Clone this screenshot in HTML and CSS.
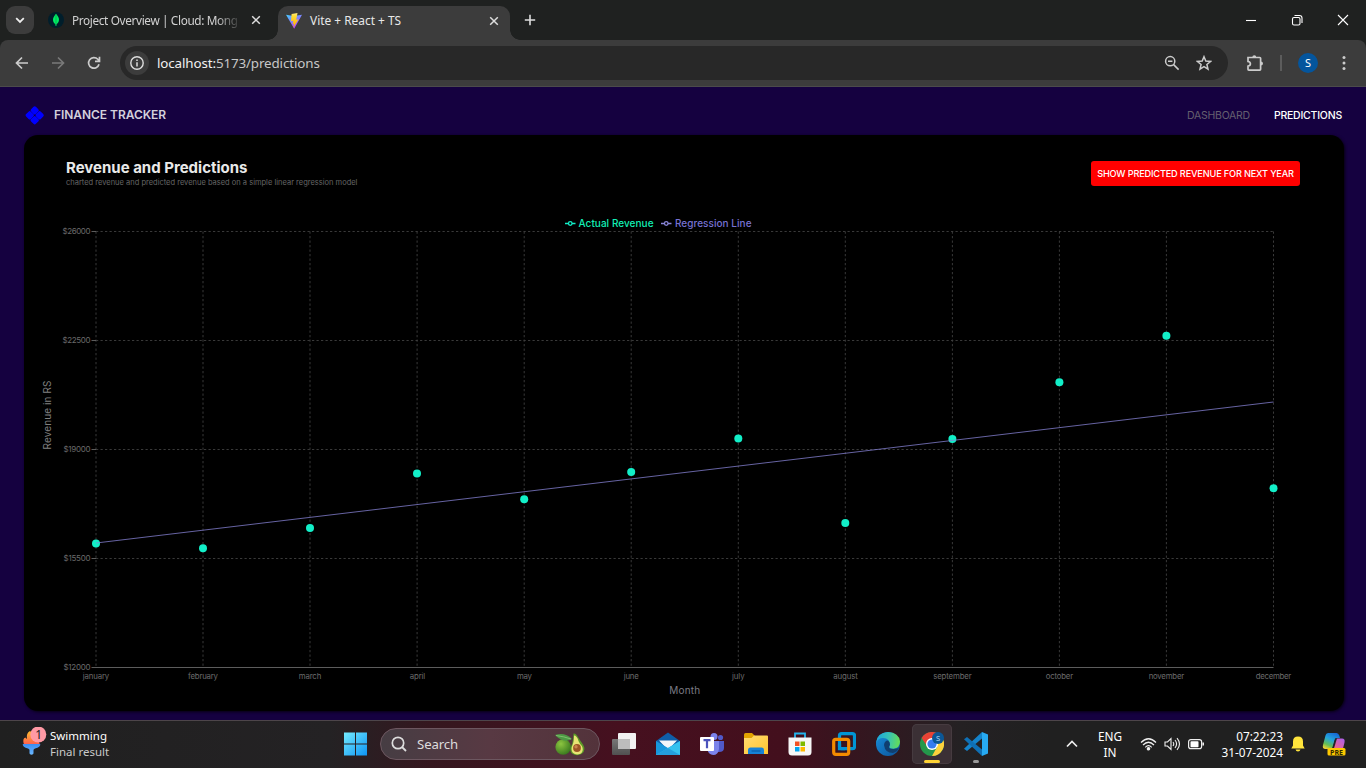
FILE: index.html
```html
<!DOCTYPE html>
<html lang="en">
<head>
<meta charset="utf-8">
<title>Vite + React + TS</title>
<link rel="stylesheet" href="styles.css">
</head>
<body>
<header class="tabs">
  <button class="tab-search"><svg width="28" height="28" viewBox="0 0 28 28"><path d="M10.2 12.2l3.8 3.7 3.8-3.7" fill="none" stroke="#eee" stroke-width="1.8"/></svg></button>
  <div class="tab idle">
    <svg width="16" height="16" viewBox="0 0 16 16"><circle cx="8" cy="8" r="8" fill="#001e2b"/><path d="M8 1.800c2 2.500 3 4 3 6 0 2.200-1.300 3.700-2.600 4.700L8.200 14h-.5l-.2-1.500C6.200 11.500 5 10 5 7.800c0-2 1-3.500 3-6z" fill="#00ed64"/><path d="M8 2v12" stroke="#00a34a" stroke-width=".7"/></svg>
    <span class="tab-title faded">Project Overview | Cloud: Mong</span>
    <svg class="close" width="10" height="10" viewBox="0 0 10 10"><path d="M1.200 1.200l7.600 7.600M8.800 1.200L1.200 8.800"/></svg>
  </div>
  <div class="tab active">
    <svg width="16" height="16" viewBox="0 0 16 16"><defs><linearGradient id="vb" x1="0" y1="0" x2=".6" y2="1"><stop offset="0" stop-color="#41d1ff"/><stop offset="1" stop-color="#bd34fe"/></linearGradient><linearGradient id="vy" x1="0" y1="0" x2="0" y2="1"><stop offset="0" stop-color="#ffea83"/><stop offset=".2" stop-color="#ffdd35"/><stop offset="1" stop-color="#ffa800"/></linearGradient></defs><path d="M0 1.700l7.600 1.300L16 1.700 8.200 15.700z" fill="url(#vb)"/><path d="M11.500 0L5.600 1l-.6 7.300 2.300-.5-.7 3.200 1.500-.5-.9 4.200 5.300-8.400-2.300.4z" fill="url(#vy)"/></svg>
    <span class="tab-title">Vite + React + TS</span>
    <svg class="close" width="10" height="10" viewBox="0 0 10 10"><path d="M1.200 1.200l7.600 7.600M8.800 1.200L1.200 8.800"/></svg>
  </div>
  <svg class="new-tab" width="12" height="12" viewBox="0 0 12 12"><path d="M6 .8v10.400M.8 6h10.400" stroke="#ddd" stroke-width="1.600"/></svg>
  <div class="window-buttons">
    <svg width="12" height="12" viewBox="0 0 12 12"><path d="M1 6.500h10"/></svg>
    <svg width="12" height="12" viewBox="0 0 12 12"><rect x="1.500" y="3.500" width="7.500" height="7.500" rx="1.500"/><path d="M3.500 1.500H8.500a2.500 2.500 0 0 1 2.500 2.500v5"/></svg>
    <svg width="12" height="12" viewBox="0 0 12 12"><path d="M1 1l10 10M11 1L1 11"/></svg>
  </div>
</header>
<div class="toolbar-wrap">
<nav class="toolbar">
  <svg class="nav-icon" width="14" height="14" viewBox="0 0 14 14"><path d="M13 7H2M7 1.500L1.500 7 7 12.500"/></svg>
  <svg class="nav-icon off" width="14" height="14" viewBox="0 0 14 14"><path d="M1 7h11M7 1.500L12.500 7 7 12.500"/></svg>
  <svg class="nav-icon" width="14" height="14" viewBox="0 0 14 14"><path d="M12 8.200A5.300 5.300 0 1 1 10.800 3.300L12.300 5M12.500 .8v4.600H8"/></svg>
  <div class="omnibox">
    <span class="site-info"><svg width="14" height="14" viewBox="0 0 14 14"><circle cx="7" cy="7" r="6.200" fill="none" stroke="#ddd" stroke-width="1.400"/><path d="M7 6.200v4.200M7 3.500v1.500" stroke="#ddd" stroke-width="1.500"/></svg></span>
    <span class="url"><b>localhost:</b>5173/predictions</span>
    <svg class="bar-icon" width="16" height="16" viewBox="0 0 16 16"><circle cx="6.200" cy="6.200" r="4.600"/><path d="M9.600 9.600l5 5M4 6.200h4.400"/></svg>
    <svg class="bar-icon" width="16" height="16" viewBox="0 0 16 16"><path d="M8 1.700l1.800 4.400 4.700.4-3.600 3 1.100 4.600L8 11.700l-4 2.400 1.100-4.600-3.600-3 4.700-.4z"/></svg>
  </div>
  <svg class="bar-icon puzzle" width="18" height="18" viewBox="0 0 18 18"><path d="M2 3.500h11.800q.8 0 .8.800v11q0 .8-.8.800H2.800q-.8 0-.8-.8v-3.100c3.200-.4 3.200-4.300 0-4.700z" stroke-width="1.700"/><path d="M6.300 3.500a2 2.200 0 0 1 4 0zM14.800 7.600a2.200 2 0 0 1 0 4z" fill="#ccc" stroke="none"/></svg>
  <i class="divider"></i>
  <span class="avatar">S</span>
  <svg class="kebab" width="4" height="16" viewBox="0 0 4 16"><circle cx="2" cy="2.500" r="1.500"/><circle cx="2" cy="8" r="1.500"/><circle cx="2" cy="13.500" r="1.500"/></svg>
</nav>
</div>

<main class="app">
  <div class="app-nav">
    <svg class="logo" width="20" height="20" viewBox="-10 -10 20 20" fill="#0000ff"><g transform="translate(-.3 .3) rotate(45)"><rect x="-6.900" y="-6.900" width="6.800" height="6.800" rx="1.700"/><rect x=".1" y="-6.900" width="6.800" height="6.800" rx="1.700"/><rect x="-6.900" y=".1" width="6.800" height="6.800" rx="1.700"/><rect x=".1" y=".1" width="6.800" height="6.800" rx="1.700"/></g></svg>
    <h1>FINANCE TRACKER</h1>
    <a class="link">DASHBOARD</a>
    <a class="link current">PREDICTIONS</a>
  </div>
  <section class="card">
    <div class="card-head">
      <div>
        <h2>Revenue and Predictions</h2>
        <p>charted revenue and predicted revenue based on a simple linear regression model</p>
      </div>
      <button class="predict"><span>SHOW PREDICTED REVENUE FOR NEXT YEAR</span></button>
    </div>
    <svg class="chart" width="1320" height="511" viewBox="24 200 1320 511">
      <g class="grid">
        <path d="M96 231.500H1273.500M96 340.500H1273.500M96 449.500H1273.500M96 558.500H1273.500"/>
        <path d="M96 231.500V667M203 231.500V667M310 231.500V667M417.100 231.500V667M524.200 231.500V667M631.200 231.500V667M738.300 231.500V667M845.300 231.500V667M952.400 231.500V667M1059.400 231.500V667M1166.400 231.500V667M1273.500 231.500V667"/>
      </g>
      <path class="axis" d="M91.500 667.500H1273.500M91.500 231.500H96M91.500 340.500H96M91.500 449.500H96M91.500 558.500H96"/>
      <g class="ylabels">
        <text x="90.500" y="234.200" textLength="28">$26000</text><text x="90.500" y="343.200" textLength="28">$22500</text><text x="90.500" y="452.200" textLength="27">$19000</text><text x="90.500" y="561.200" textLength="27">$15500</text><text x="90.500" y="670.200" textLength="27">$12000</text>
      </g>
      <g class="xlabels">
        <text x="96" y="679" textLength="26.500">january</text><text x="203" y="679" textLength="30">february</text><text x="310" y="679" textLength="22.500">march</text><text x="417.500" y="679" textLength="15.500">april</text><text x="524.500" y="679" textLength="15">may</text><text x="631.300" y="679" textLength="15">june</text><text x="738.300" y="679" textLength="12.500">july</text><text x="845.500" y="679" textLength="24.500">august</text><text x="952.400" y="679" textLength="38.500">september</text><text x="1059.400" y="679" textLength="27.500">october</text><text x="1166.400" y="679" textLength="35.500">november</text><text x="1273.500" y="679" textLength="35.500">december</text>
      </g>
      <text class="axis-title month" x="684.700" y="694" textLength="31">Month</text>
      <text class="axis-title" transform="translate(51 415) rotate(-90)" textLength="69">Revenue in RS</text>
      <g fill="none" stroke="#12efc8" stroke-width="1.300"><path d="M565 223.500h3.500M572 223.500h3.500"/><circle cx="570.250" cy="223.500" r="1.800"/></g>
      <text class="legend actual" x="578.500" y="227" textLength="75">Actual Revenue</text>
      <g fill="none" stroke="#8884d8" stroke-width="1.300"><path d="M661 223.500h3.500M668 223.500h3.500"/><circle cx="666.250" cy="223.500" r="1.800"/></g>
      <text class="legend regression" x="675" y="227" textLength="76.500">Regression Line</text>
      <g fill="#12efc8"><circle cx="96" cy="543.400" r="4"/><circle cx="203" cy="548.200" r="4"/><circle cx="310" cy="528" r="4"/><circle cx="417" cy="473.500" r="4"/><circle cx="524.200" cy="499.300" r="4"/><circle cx="631.200" cy="472" r="4"/><circle cx="738.300" cy="438.600" r="4"/><circle cx="845.300" cy="522.900" r="4"/><circle cx="952.400" cy="438.900" r="4"/><circle cx="1059.400" cy="382.200" r="4"/><circle cx="1166.400" cy="335.700" r="4"/><circle cx="1273.500" cy="488.200" r="4"/></g>
      <path d="M96 543L1273.500 402" stroke="#8884d8" stroke-width=".75"/>
    </svg>
  </section>
</main>

<footer class="taskbar">
  <div class="widget">
    <svg width="28" height="34" viewBox="0 0 28 34"><defs><linearGradient id="fl" x1="0" y1="0" x2="0" y2="1"><stop offset="0" stop-color="#ffbd2e"/><stop offset="1" stop-color="#ff5d4d"/></linearGradient><linearGradient id="tb" x1="0" y1="0" x2="0" y2="1"><stop offset="0" stop-color="#3a8cf0"/><stop offset="1" stop-color="#6bb8ff"/></linearGradient></defs><path d="M4 17.500q-2-6 1.500-7 .5 1.500 1.500 1Q6 6 10 4q6 4 10 13.500z" fill="url(#fl)"/><path d="M2.700 17h17.600q.3 3.300-5.300 4.500-1.500.5-1.500 1.500v3.500q-2 2.600-4 0V23q0-1-1.500-1.500-5.500-1.200-5.300-4.500z" fill="url(#tb)"/><circle cx="18.300" cy="7.500" r="8" fill="#ff99a4"/><text x="18.600" y="11.800" text-anchor="middle" font-family="Noto Sans,sans-serif" font-size="12" fill="#222">1</text></svg>
    <div><strong>Swimming</strong><span>Final result</span></div>
  </div>
  <svg class="start" width="24" height="24" viewBox="0 0 24 24"><defs><linearGradient id="wn" gradientUnits="userSpaceOnUse" x1="0" y1="0" x2="24" y2="24"><stop offset="0" stop-color="#75ecff"/><stop offset="1" stop-color="#0a91f4"/></linearGradient></defs><path d="M0 .500h11v11H0zM12 .500h11v11H12zM0 12.500h11v11H0zM12 12.500h11v11H12z" fill="url(#wn)"/></svg>
  <div class="search">
    <svg width="16" height="16" viewBox="0 0 16 16"><circle cx="7" cy="7" r="5.700" fill="none" stroke="#ddd" stroke-width="1.700"/><path d="M11 11l4 4" stroke="#ddd" stroke-width="1.800"/></svg>
    <span>Search</span>
    <svg width="30" height="23" viewBox="0 0 30 23"><defs><radialGradient id="av" cx=".35" cy=".3" r=".8"><stop offset="0" stop-color="#8cc540"/><stop offset="1" stop-color="#32721b"/></radialGradient></defs><circle cx="8.200" cy="14" r="7.800" fill="url(#av)"/><path d="M0 2q10-3 17 4-8 5-17-4z" fill="#4d9944"/><path d="M1 2.500q8 1 15 3.500" stroke="#8cc876" stroke-width=".8" fill="none"/><path d="M18.500.500q2-.5 3.500 2 3 5 6 9 3.500 6-1.500 9.500-5 2.500-9.500-.5-3-3-.5-8 1.500-3 2-12z" fill="#5b9a28"/><path d="M19 2.500q3 0 4.500 5.500 1 2.500 3.400 5 2.500 5-1.400 7.700-4.500 2-7.700-1-2.500-3-.3-7.700 1.500-3 1.500-9.500z" fill="#e8e474"/><circle cx="22" cy="15" r="3.900" fill="#9c5526"/><circle cx="21" cy="13.800" r="1.700" fill="#c9824d"/></svg>
  </div>
  <div class="apps">
    <span class="app-slot"><svg viewBox="0 0 24 24"><defs><linearGradient id="tv" x1="0" y1="0" x2="0" y2="1"><stop offset="0" stop-color="#777"/><stop offset="1" stop-color="#505050"/></linearGradient></defs><rect x="6" y="1" width="18" height="16" rx="1" fill="#f2f2f2"/><rect x="0" y="7" width="18" height="16" rx="1" fill="url(#tv)"/><path d="M6 7h12v10H6z" fill="#bdbdbd"/></svg></span>
    <span class="app-slot"><svg viewBox="0 0 24 24"><path d="M0 9L12 .500 24 9v5H0z" fill="#0f5ea8"/><path d="M3 8.500h18L12 18z" fill="#f3f6fa"/><path d="M0 9l12 7 12-7v14H0z" fill="#1797dc"/><path d="M24 9v14H0l12-7z" fill="#35c1ee"/><path d="M0 23l12-7 12 7z" fill="#249fdd"/></svg></span>
    <span class="app-slot"><svg viewBox="0 0 24 24"><circle cx="14" cy="4.500" r="3.500" fill="#7b83eb"/><circle cx="20.500" cy="5.500" r="2.600" fill="#5059c9"/><path d="M15 9h9v7q0 4-5 4h-4z" fill="#5059c9"/><path d="M7.500 9H19v8q-1 6-5.800 6-4.700-.5-5.700-5z" fill="#7b83eb"/><rect y="5" width="14" height="14" rx="1" fill="#fff"/><path d="M3.500 8.200h7M7 8.200v8" stroke="#4b53bc" stroke-width="2.200"/></svg></span>
    <span class="app-slot"><svg viewBox="0 0 24 24"><defs><linearGradient id="fo" x1="0" y1="0" x2="1" y2="1"><stop offset="0" stop-color="#ffdc72"/><stop offset="1" stop-color="#ffc42e"/></linearGradient></defs><path d="M0 2.500Q0 1 1.500 1H8l2.500 2.500V9H0z" fill="#e2a300"/><path d="M0 6h7.500L10 3.500h13q1 0 1 1V22H0z" fill="url(#fo)"/><path d="M4 22v-4q0-2.500 2.500-2.500h11q2.500 0 2.500 2.500v4z" fill="#1683d8"/><path d="M7.500 19h9" stroke="#0b5eaa" stroke-width="1.200"/></svg></span>
    <span class="app-slot"><svg viewBox="0 0 24 24"><path d="M7 6V1.500h10V6" fill="none" stroke="#24b5ed" stroke-width="1.800"/><path d="M.5 5.500h23V20q0 3.500-3.500 3.500H4Q.5 23.500.5 20z" fill="#f7f7f7"/><path d="M7 9.500h4.500V14H7z" fill="#f25022"/><path d="M12.500 9.500H17V14h-4.500z" fill="#7fba00"/><path d="M7 15h4.500v4.500H7z" fill="#00a4ef"/><path d="M12.500 15H17v4.500h-4.500z" fill="#ffb900"/></svg></span>
    <span class="app-slot"><svg viewBox="0 0 24 24"><rect x="7.500" y="1.700" width="15" height="15" rx="2" fill="none" stroke="#0095d5" stroke-width="3.200"/><rect x="1.700" y="7.300" width="15" height="15" rx="2" fill="none" stroke="#f38b00" stroke-width="3.200"/><path d="M7.500 12v4.700h5.500" fill="none" stroke="#0095d5" stroke-width="3.200"/></svg></span>
    <span class="app-slot"><svg viewBox="0 0 24 24"><defs><linearGradient id="eg" x1="0" y1=".3" x2="1" y2=".4"><stop offset="0" stop-color="#1ba5de"/><stop offset=".5" stop-color="#35c1b8"/><stop offset="1" stop-color="#65dc56"/></linearGradient><linearGradient id="eb" x1="0" y1="0" x2="1" y2="1"><stop offset="0" stop-color="#178fdd"/><stop offset="1" stop-color="#0c5298"/></linearGradient></defs><circle cx="12" cy="12" r="12" fill="url(#eb)"/><path d="M0 11Q1 .5 12 0q11 .5 12 9.500 0 6.500-6.500 7.300-5.500 0-3.500-3.300Q14 6 7 6 2 6 0 11z" fill="url(#eg)"/><path d="M8 13q.5-4.500 4-4.500 2 1.500 2 4-3.500 4.800 4 4.500 4-.5 5-1.500-1 4-6 5.500-8 0-9-8z" fill="#103f70"/></svg></span>
    <span class="app-slot selected"><svg viewBox="0 0 24 24"><circle cx="12" cy="12" r="12" fill="#24984b"/><path d="M1.600 6a12 12 0 0 1 20.800 0L12 7 7 14z" fill="#e94235"/><path d="M22.400 6A12 12 0 0 1 12 24l5-9V6z" fill="#fdd23c"/><circle cx="12" cy="12" r="6" fill="#fff"/><circle cx="12" cy="12" r="4.600" fill="#367cf0"/><circle cx="18" cy="6" r="6" fill="#0b5796"/><text x="18" y="8.800" text-anchor="middle" font-family="Noto Sans,sans-serif" font-size="7.500" fill="#b5d5f2">S</text></svg></span>
    <span class="app-slot running"><svg viewBox="0 0 24 24"><path d="M18 0v6.500L3 19 0 16.800z" fill="#1483ca"/><path d="M0 7.200L3 5l15 12.500V24z" fill="#0f70b5"/><path d="M18 0l6 2.500v19L18 24z" fill="#27aaf2"/></svg></span>
  </div>
  <div class="tray">
    <svg width="12" height="8" viewBox="0 0 12 8"><path d="M1 6.500l5-5 5 5" fill="none" stroke="#eee" stroke-width="1.700"/></svg>
    <div class="lang"><span>ENG</span><span>IN</span></div>
    <div class="status">
      <svg width="17" height="14" viewBox="0 0 17 14" fill="none" stroke="#eee" stroke-width="1.200"><path d="M1 5.500q7.500-7.500 15 0M3 8q5.500-5.500 11 0M5.300 10.300q3.200-3.300 6.400 0"/><circle cx="8.500" cy="11.800" r="1.200" fill="#fff"/></svg>
      <svg width="17" height="14" viewBox="0 0 17 14" fill="none" stroke="#eee" stroke-width="1.100"><path d="M1 5h2.500L7 1.500v11L3.500 9H1zM9 5q1.500 2 0 4M11 3q3.200 4 0 8M13 1.200q5 5.800 0 11.600"/></svg>
      <svg width="17" height="12" viewBox="0 0 17 12"><rect x=".6" y="1.600" width="13" height="9" rx="2.200" fill="none" stroke="#eee" stroke-width="1.200"/><rect x="2.500" y="3.200" width="8" height="6" rx=".8" fill="#fff"/><path d="M15.200 4.500v3" stroke="#eee" stroke-width="1.600"/></svg>
    </div>
    <div class="clock"><span>07:22:23</span><span>31-07-2024</span></div>
    <svg class="bell" width="14" height="16" viewBox="0 0 14 16" fill="#ffe43c"><path d="M7 .5q5 0 5 5v4l1.700 3H.3L2 9.500v-4q0-5 5-5zM4.500 13.500h5q-.5 2-2.500 2t-2.500-2z"/></svg>
    <svg class="copilot" width="25" height="24" viewBox="0 0 25 24"><defs><linearGradient id="ca" x1=".7" y1="0" x2=".2" y2="1"><stop offset="0" stop-color="#1769d6"/><stop offset=".4" stop-color="#23a4de"/><stop offset=".75" stop-color="#62bd55"/><stop offset="1" stop-color="#f1d032"/></linearGradient><linearGradient id="cb" x1="1" y1="0" x2="0" y2="1"><stop offset="0" stop-color="#a75ff0"/><stop offset="1" stop-color="#f7667f"/></linearGradient></defs><path d="M6 1h8.500q2 0 2.800 2.500L18 6h-3q-1.500 0-2.200 2l-2 7.500Q10 17 8 17H3.500Q0 17 1 13L3.500 3.500Q4 1 6 1z" fill="url(#ca)"/><path d="M15.500 6.500H20q3.300 0 2.500 4l-1.500 6h-10L13.500 8q.5-1.500 2-1.500z" fill="url(#cb)"/><path d="M14 6.500l-3 10" stroke="#242228" stroke-width="1.800"/><rect x="5.500" y="16" width="18" height="7.500" rx="1.500" fill="#ffc900"/><text x="14.500" y="22.500" text-anchor="middle" font-family="Open Sans,sans-serif" font-weight="700" font-size="7" fill="#332800">PRE</text></svg>
  </div>
</footer>
</body>
</html>
```

FILE: styles.css
```css
* { box-sizing: border-box; }
body {
  margin: 0;
  width: 1366px;
  height: 768px;
  overflow: hidden;
  display: grid;
  grid-template-rows: 40px 47px 633px 48px;
  background: #1f2120;
  color: #e3e3e3;
  font-family: "Noto Sans", "Open Sans", sans-serif;
}
svg { display: block; flex: none; }
button { border: 0; padding: 0; margin: 0; font: inherit; }

.tabs { display: flex; align-items: center; padding-left: 6px; background: #1f2120; }
.tab-search { width: 28px; height: 28px; border-radius: 9px; background: #3c3c3c; }
.tab { display: flex; align-items: center; gap: 8px; font-size: 11.9px; white-space: nowrap; }
.tab.idle { width: 230px; padding-left: 14px; margin-right: 14px; }
.tab-title { width: 168px; line-height: 20px; }
.faded { font-size: 11.8px; letter-spacing: -.36px; color: #d2d2d2; mask-image: linear-gradient(90deg, #000 86%, transparent 101%); }
.tab .close { margin-left: 3px; }
.close path { stroke: #ddd; stroke-width: 1.500; fill: none; }
.tab.active {
  width: 232px;
  height: 34px;
  margin-top: 6px;
  padding: 0 8px 5px;
  border-radius: 10px 10px 0 0;
  background: #3c3c3c;
  position: relative;
}
.tab.active .tab-title { padding-bottom: 1px; color: #e8e8e8; }
.tab.active .close { margin-left: 3px; }
.tab.active::before, .tab.active::after {
  content: "";
  position: absolute;
  bottom: 0;
  width: 10px;
  height: 10px;
}
.tab.active::before { left: -10px; background: radial-gradient(circle at 0 0, transparent 9.500px, #3c3c3c 10px); }
.tab.active::after { right: -10px; background: radial-gradient(circle at 100% 0, transparent 9.500px, #3c3c3c 10px); }
.new-tab { margin-left: 14px; }
.window-buttons { display: flex; gap: 34px; margin-left: auto; padding-right: 17px; }
.window-buttons svg { fill: none; stroke: #fff; stroke-width: 1.100; }

.toolbar-wrap { background: #1f2120; }
.toolbar {
  height: 47px;
  display: flex;
  align-items: center;
  padding: 0 0 1px 15px;
  border-radius: 8px 8px 0 0;
  background: #3c3c3c;
  border-bottom: 1px solid #4b4b4b;
}
.nav-icon { margin-right: 22px; fill: none; stroke: #ccc; stroke-width: 1.700; }
.nav-icon.off { stroke: #797979; }
.omnibox {
  width: 1108px;
  height: 34px;
  margin-left: -3px;
  padding: 0 16px 0 5px;
  border-radius: 17px;
  background: #282828;
  display: flex;
  align-items: center;
}
.site-info { width: 24px; height: 24px; border-radius: 12px; background: #3c3c3c; display: grid; place-items: center; }
.url { margin: 0 auto 0 8px; font-size: 13.400px; letter-spacing: -.13px; color: #c7c7c7; }
.url b { font-weight: 400; color: #f1f1f1; }
.bar-icon { fill: none; stroke: #ccc; stroke-width: 1.500; }
.omnibox .bar-icon + .bar-icon { margin-left: 16px; }
.puzzle { margin-left: 18px; }
.divider { width: 2px; height: 16px; margin: 0 16px 0 16px; background: #5c5c5c; }
.avatar { width: 20px; height: 20px; border-radius: 10px; background: #04559d; color: #fff; font-size: 11px; line-height: 20px; text-align: center; }
.kebab { margin-left: 24px; fill: #ccc; }

.app { background: #150140; font-family: Inter, sans-serif; }
.app-nav { height: 48px; padding: 8px 24px 0; display: flex; align-items: center; }
.logo { margin-right: 1px; margin-left: 1px; }
.app-nav h1 { margin: 0 auto 0 8px; padding-bottom: 2px; font-size: 12px; font-weight: 600; letter-spacing: -.05px; color: #d3d0dc; }
.link { margin-left: 24px; font-size: 10.5px; letter-spacing: -.25px; color: #65606f; }
.link.current { color: #fff; font-weight: 500; letter-spacing: -.22px; }
.card { width: 1320px; height: 576px; margin-left: 24px; border-radius: 14px; background: #000; box-shadow: 1px 1px 3px #000b; }
.card-head { height: 65px; padding: 24px 44px 0 42px; display: flex; justify-content: space-between; align-items: flex-start; }
.card h2 { margin: 0; font-size: 15px; line-height: 17px; font-weight: 700; letter-spacing: 0; color: #e9e9e9; }
.card p { margin: 1px 0 0; font-size: 7.5px; line-height: 11px; color: #666; }
.predict { width: 209px; height: 25px; margin-top: 2px; border-radius: 3px; background: #f00; color: #fff; font-size: 9.200px; letter-spacing: -.17px; font-weight: 500; white-space: nowrap; }

.chart text { font-family: Inter, sans-serif; }
.grid { fill: none; stroke: #3f3f3f; stroke-width: .9; stroke-dasharray: 2.250 2.250; }
.axis { fill: none; stroke: #666; stroke-width: .9; }
.ylabels { font-size: 8px; fill: #6b6b6b; text-anchor: end; }
.xlabels { font-size: 7.8px; fill: #6b6b6b; text-anchor: middle; }
.axis-title { font-size: 10px; fill: #808080; text-anchor: middle; }
.axis-title.month { fill: #7b7b85; }
.legend { font-size: 10px; font-weight: 500; }
.actual { fill: #12efb5; }
.regression { fill: #7772d3; }

.taskbar {
  display: flex;
  align-items: center;
  padding-bottom: 1px;
  border-top: 1px solid #4d454a;
  background: linear-gradient(90deg, #202020 0, #242224 330px, #35171f 430px, #46101f 620px, #430f1d 780px, #36151f 850px, #242123 960px, #202020 1050px);
}
.widget { width: 343px; padding-left: 20px; display: flex; gap: 2px; align-items: center; font-size: 11.500px; line-height: 16px; color: #c9c9c9; }
.widget div { display: grid; padding-bottom: 1px; }
.widget strong { font-weight: 400; color: #fff; }
.start { margin-left: 1px; }
.search {
  width: 220px;
  height: 32px;
  margin-left: 12px;
  padding: 0 14px 0 10px;
  border: 1px solid #6d5760;
  border-radius: 16px;
  background: linear-gradient(90deg, #463d43, #583943 50%, #53333b);
  display: flex;
  align-items: center;
  font-size: 13.2px;
  letter-spacing: -.1px;
  color: #ddd;
}
.search span { margin: 0 auto 0 10px; }
.apps { display: flex; gap: 4px; margin-left: 4px; }
.app-slot { width: 40px; height: 40px; display: grid; place-items: center; position: relative; border-radius: 5px; }
.app-slot svg { width: 24px; height: 24px; }
.selected { background: #3b3035; box-shadow: inset 0 0 0 1px #463b40; }
.selected::after, .running::after { content: ""; position: absolute; bottom: 1px; width: 16px; height: 3px; border-radius: 2px; background: #ffd335; }
.running::after { width: 6px; background: #999; }
.tray { margin-left: auto; padding-right: 19px; display: flex; align-items: center; font-size: 11.800px; line-height: 16px; color: #fff; }
.lang { display: grid; width: 30px; margin-left: 17px; padding-bottom: 1px; text-align: center; }
.status { display: flex; align-items: center; gap: 7px; margin-left: 15px; }
.clock { display: grid; width: 70px; margin-left: 8px; padding-bottom: 1px; text-align: right; }
.bell { margin-left: 8px; }
.copilot { margin-left: 17px; }
```
